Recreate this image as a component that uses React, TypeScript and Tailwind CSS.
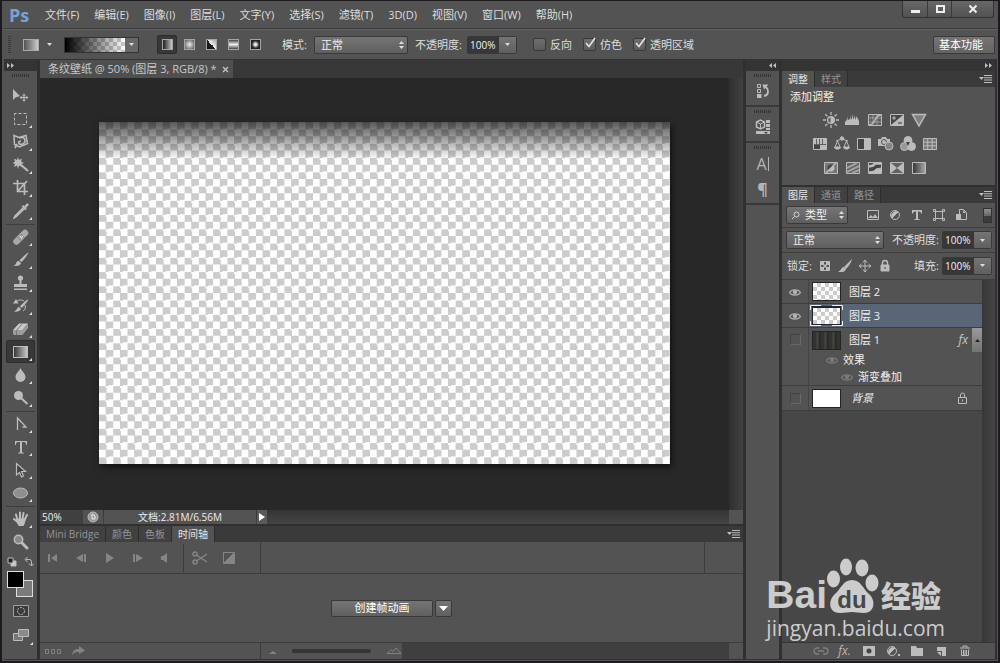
import { useState } from 'react'
import type { ReactNode } from 'react'

const CHECKER = 'bg-[repeating-conic-gradient(#cccccc_0_25%,#ffffff_0_50%)]'

const menus = [
  '文件(F)', '编辑(E)', '图像(I)', '图层(L)', '文字(Y)', '选择(S)',
  '滤镜(T)', '3D(D)', '视图(V)', '窗口(W)', '帮助(H)',
]

interface IconProps {
  children: ReactNode
  w?: number
  h?: number
  className?: string
}

function Icon({ children, w = 16, h = 16, className = 'text-[#bcbcbc]' }: IconProps) {
  return (
    <svg width={w} height={h} viewBox={`0 0 ${w} ${h}`} fill="none" stroke="currentColor" className={`shrink-0 ${className}`} aria-hidden="true">
      {children}
    </svg>
  )
}

interface Tool {
  name: string
  icon: ReactNode
  single?: boolean
}

const toolGroups: Tool[][] = [
  [
    {
      name: '移动工具',
      single: true,
      icon: (
        <g fill="currentColor" stroke="none">
          <path d="M0 1v11l2.500-2.500L7 8z" />
          <path d="M11 5.500l1.800 2h-1.200v1.400h1.700V7.700l2.200 1.800-2.200 1.800v-1.200h-1.700v1.700h1.200l-1.800 2-1.800-2h1.200v-1.700H8.700v1.200L6.500 9.500l2.200-1.800v1.200h1.700V7.500H9.200z" />
        </g>
      ),
    },
    { name: '矩形选框工具', icon: <rect x="1.500" y="2.500" width="12" height="11" strokeDasharray="3 2" strokeDashoffset="1" /> },
    {
      name: '套索工具',
      icon: (
        <g>
          <path d="M1 1.500l5 2 7-2 1.500 8-8 3.500-5-2.500z" strokeWidth="1.500" />
          <path d="M6 4c4-1.500 6 0 6 3s-4 4-5.500 3S5.500 7 8 7M4 10l-2 4" strokeWidth="1.700" />
        </g>
      ),
    },
    {
      name: '魔棒工具',
      icon: (
        <g>
          <path d="M7.500 7.500L15 14" strokeWidth="2.200" />
          <path d="M5 0l1 3 3-1.500L8 4.500 11 6 8 7l1 3-3-1.500L5 12 4 8.500 1 10l1-3-2.500-1L2 4.500 1 1.500 4 3z" fill="currentColor" stroke="none" />
        </g>
      ),
    },
    { name: '裁剪工具', icon: <path d="M4.500 0v11.500H15M0 3.500h11.500V15M4.500 11.500L14 1" strokeWidth="1.700" /> },
    {
      name: '吸管工具',
      icon: (
        <g>
          <path d="M10 5l-8 8-1 2 2-1 8-8" strokeWidth="1.400" />
          <path d="M9 3.500l1-1 1.500 1 2-2.500c1.500-1 2.500.5 1.500 1.500l-2.500 2.500 1 1-1.500 1z" fill="currentColor" strokeWidth=".6" />
        </g>
      ),
    },
  ],
  [
    {
      name: '污点修复画笔工具',
      icon: (
        <g>
          <path d="M3.500 12.500L12 4" strokeWidth="6.500" strokeLinecap="round" stroke="#a8a8a8" />
          <path d="M4.500 8l4 4M7.500 5l4 4" stroke="#7a7a7a" />
          <path d="M8 9h1M9 7.500h1M7 8h1" stroke="#eee" />
        </g>
      ),
    },
    {
      name: '画笔工具',
      icon: (
        <g fill="currentColor" stroke="none">
          <path d="M15.500.500C16 1 10 9 8.500 10L6.500 8.500C7.500 7 15 0 15.500.500z" />
          <path d="M5.800 9l2.200 2c-.5 3-5 3.500-8 2.500 2-.3 2.800-1 3.200-2.500.400-1.500 1.500-2 2.600-2z" />
        </g>
      ),
    },
    {
      name: '仿制图章工具',
      icon: (
        <g fill="currentColor" stroke="none">
          <circle cx="7.500" cy="3" r="2.600" />
          <path d="M6.500 4h2v5H14v3H1V9h5.500z" />
          <path d="M1 13.500h13V15H1z" />
        </g>
      ),
    },
    {
      name: '历史记录画笔工具',
      icon: (
        <g>
          <path d="M15 1.500C16 2 10 9 9 10L7 8.500C8 7 14 1 15 1.500zM6 9l2 2c-1 2.500-4 3-7 2.500 3-1 3-4.500 5-4.500z" fill="currentColor" stroke="none" />
          <path d="M3 4c3-3 6-2 8-1M12 7c1 3 0 5-2 6" />
          <path d="M0 5.500L3 1l2.500 4.500z" fill="currentColor" stroke="none" />
        </g>
      ),
    },
    {
      name: '橡皮擦工具',
      icon: (
        <g stroke="none">
          <path d="M0 9l6-6.500h9L9.500 9z" fill="#cacaca" />
          <path d="M0 9h9.500v5H1.500C.5 14 0 13 0 12zM9.500 9L15 2.500V7l-5.500 7z" fill="#9c9c9c" />
          <path d="M3.500 9.500L9.500 2.500M3.500 9v5" stroke="#777" fill="none" />
        </g>
      ),
    },
    {
      name: '渐变工具',
      icon: (
        <g>
          <defs>
            <linearGradient id="toolGradient">
              <stop stopColor="#333" />
              <stop offset="1" stopColor="#ccc" />
            </linearGradient>
          </defs>
          <rect x=".5" y="2.500" width="14" height="11" fill="url(#toolGradient)" />
        </g>
      ),
    },
    { name: '模糊工具', icon: <path d="M7.500 1c1 3 5 5.500 5 9a5 5 0 01-10 0c0-3.500 4-6 5-9z" fill="currentColor" stroke="none" /> },
    {
      name: '减淡工具',
      icon: (
        <g>
          <circle cx="5.500" cy="5.500" r="4.500" fill="currentColor" stroke="none" />
          <path d="M8 8l6.500 6" strokeWidth="2" />
        </g>
      ),
    },
  ],
  [
    { name: '钢笔工具', icon: <path d="M4.500 14V2L13 11H9.500" strokeWidth="1.300" /> },
    {
      name: '横排文字工具',
      icon: <path d="M2 2h12v4h-.8C13 4 12.500 3 11 3H9v9.500c0 1 .5 1.200 2 1.300v.7H5v-.7c1.500-.1 2-.3 2-1.300V3H5C3.500 3 3 4 2.800 6H2z" fill="currentColor" stroke="none" />,
    },
    { name: '路径选择工具', icon: <path d="M3.500 1.500v11.500l3-2.500 2 4.500 2-1-2-4.500h4z" fill="#404040" strokeWidth="1.200" /> },
    { name: '椭圆工具', icon: <ellipse cx="7.500" cy="8" rx="7" ry="5" fill="#8f8f8f" /> },
  ],
  [
    {
      name: '抓手工具',
      icon: (
        <g>
          <path d="M4.500 9L3 3.500M7 8V1.500M9.500 8l1-6M11.500 9l2.500-5M4.500 11L1 8" strokeWidth="2" strokeLinecap="round" />
          <path d="M3.500 7.500h9c0 4-1 5.500-2 7.500h-5c-.5-2-2.500-3-2-7.500z" fill="currentColor" stroke="none" />
        </g>
      ),
    },
    {
      name: '缩放工具',
      single: true,
      icon: (
        <g>
          <circle cx="5.500" cy="5.500" r="4.200" fill="#888" strokeWidth="1.500" />
          <path d="M9 9l5 5" strokeWidth="3" strokeLinecap="round" />
        </g>
      ),
    },
  ],
]

const SelectArrows = ({ className = '' }: { className?: string }) => (
  <svg width="7" height="8" viewBox="0 0 7 8" fill="#dedede" className={`pointer-events-none absolute top-1/2 -translate-y-1/2 ${className}`} aria-hidden="true">
    <path d="M3.500 0L6 3H1zM1 5h5L3.500 8z" />
  </svg>
)

const Down = ({ className = 'text-[#dedede]' }: { className?: string }) => (
  <svg width="5" height="3" viewBox="0 0 5 3" fill="currentColor" className={className} aria-hidden="true">
    <path d="M0 0h5L2.500 3z" />
  </svg>
)

function Select({ label, options, width, pad = 'pl-[6px]' }: { label: string; options: string[]; width: string; pad?: string }) {
  return (
    <span className={`relative flex shrink-0 ${width}`}>
      <select aria-label={label} className={`h-[18px] w-full appearance-none rounded-[2px] border border-[#393939] bg-linear-to-b from-[#757575] to-[#5f5f5f] leading-4 text-[#f0f0f0] ${pad}`}>
        {options.map((o) => (
          <option key={o}>{o}</option>
        ))}
      </select>
      <SelectArrows className="right-[3px]" />
    </span>
  )
}

function Percent({ label }: { label: string }) {
  const [value, setValue] = useState('100%')
  return (
    <span className="flex h-[18px] shrink-0 rounded-[2px] border border-[#393939]">
      <input
        aria-label={label}
        value={value}
        onChange={(e) => setValue(e.target.value)}
        className="w-[31px] bg-[#373737] px-[2px] text-[10px] leading-4 text-[#f2f2f2]"
      />
      <button aria-label={`${label}滑块`} className="flex w-[17px] items-center justify-center bg-linear-to-b from-[#757575] to-[#5f5f5f]">
        <Down />
      </button>
    </span>
  )
}

function Check({ label, checked = false }: { label: string; checked?: boolean }) {
  const [on, setOn] = useState(checked)
  return (
    <label className="flex items-center gap-1">
      <span className="relative flex">
        <input
          type="checkbox"
          checked={on}
          onChange={() => setOn(!on)}
          className="size-[13px] appearance-none rounded-[2px] border border-[#393939] bg-linear-to-b from-[#6e6e6e] to-[#5c5c5c]"
        />
        {on && (
          <svg width="14" height="13" viewBox="0 0 14 13" fill="none" stroke="#e4e4e4" strokeWidth="1.600" className="pointer-events-none absolute -top-px left-0" aria-hidden="true">
            <path d="M3 6l3 3.500L12 1" />
          </svg>
        )}
      </span>
      {label}
    </label>
  )
}

const Divider = () => <span className="h-[20px] w-px shrink-0 bg-[#3c3c3c]" />

const Grip = () => (
  <span className="mx-auto block h-[3px] w-[18px] bg-[repeating-linear-gradient(90deg,#333333_0_1px,#535353_1px_2px)]" />
)

const PanelMenu = () => (
  <button aria-label="面板菜单" className="ml-auto flex items-center px-[3px]">
    <svg width="13" height="8" viewBox="0 0 13 8" fill="#bdbdbd" aria-hidden="true">
      <path d="M0 2h5L2.500 5zM5 0h8v1H5zM5 2.300h8v1H5zM5 4.600h8v1H5zM5 7h8v1H5z" />
    </svg>
  </button>
)

function Tabs({ items, active }: { items: string[]; active: number }) {
  const [current, setCurrent] = useState(active)
  return (
    <div className="flex h-4 shrink-0 bg-[#3a3a3a] text-[10px]">
      {items.map((t, i) => (
        <button
          key={t}
          onClick={() => setCurrent(i)}
          className={`border-r border-[#2c2c2c] px-[6px] leading-4 ${i === current ? 'bg-[#535353] text-[#e6e6e6]' : 'bg-[#414141] text-[#959595]'}`}
        >
          {t}
        </button>
      ))}
      <PanelMenu />
    </div>
  )
}

const Chevrons = ({ left = false }: { left?: boolean }) => (
  <svg width="7" height="5" viewBox="0 0 7 5" fill="#c0c0c0" className={left ? 'rotate-180' : ''} aria-hidden="true">
    <path d="M0 0l3 2.500L0 5zM4 0l3 2.500L4 5z" />
  </svg>
)

const Eye = ({ dim = false }: { dim?: boolean }) => (
  <svg width="12" height="8" viewBox="0 0 12 8" className={dim ? 'text-[#7a7a7a]' : 'text-[#b4b4b4]'} fill="none" stroke="currentColor" aria-hidden="true">
    <path d="M.5 4.500C2.500 1 9.500 1 11.500 4.500 9.500 8 2.500 8 .5 4.500z" strokeWidth="1.200" />
    <circle cx="6" cy="4.200" r="1.700" fill="currentColor" />
  </svg>
)

function MenuBar() {
  return (
    <header className="flex h-[28px] shrink-0 items-center border-b border-[#3a3a3a] pl-[5px]">
      <span className="w-[36px] text-[18px] leading-5 font-bold text-[#74a3d6]">Ps</span>
      <nav className="flex gap-[15px]">
        {menus.map((m) => (
          <button key={m} className="whitespace-nowrap">{m}</button>
        ))}
      </nav>
      <div className="mr-[3px] ml-auto flex h-[17px] self-start rounded-b-[3px] border border-t-0 border-[#343434] bg-linear-to-b from-[#686868] to-[#525252]">
        <button aria-label="最小化" className="flex w-[25px] items-center justify-center border-r border-[#3a3a3a]">
          <Icon w={10} h={10} className="text-[#eeeeee]"><path d="M1 7.500h9" strokeWidth="3" /></Icon>
        </button>
        <button aria-label="最大化" className="flex w-[24px] items-center justify-center border-r border-[#3a3a3a]">
          <Icon w={10} h={10} className="text-[#eeeeee]"><path d="M2 2h7v6H2z" strokeWidth="2" /></Icon>
        </button>
        <button aria-label="关闭" className="flex w-[41px] items-center justify-center">
          <Icon w={10} h={10} className="text-[#eeeeee]"><path d="M1.500 1.500l7 7M8.500 1.500l-7 7" strokeWidth="2" /></Icon>
        </button>
      </div>
    </header>
  )
}

const gradientModes = [
  { name: '线性渐变', bg: 'bg-linear-to-r from-[#222222] to-[#cccccc]' },
  { name: '径向渐变', bg: 'bg-[radial-gradient(#eeeeee,#555555)]' },
  { name: '角度渐变', bg: 'bg-[linear-gradient(45deg,#111111,#222222_50%,#eeeeee_50%,#aaaaaa)]' },
  { name: '对称渐变', bg: 'bg-[linear-gradient(#444444,#eeeeee_50%,#444444)]' },
  { name: '菱形渐变', bg: 'bg-[radial-gradient(#ffffff_10%,#222222_60%,#222222)]' },
]

function OptionsBar() {
  const [mode, setMode] = useState(0)
  return (
    <div className="flex h-[31px] shrink-0 items-center border-t border-b border-t-[#626262] border-b-[#333333] pl-1">
      <span className="h-[18px] w-[3px] bg-[repeating-linear-gradient(#3b3b3b_0_1px,#535353_1px_2px)]" />
      <button aria-label="工具预设" className="ml-[12px] flex items-center gap-2">
        <span className="h-[12px] w-[16px] border border-[#aaaaaa] bg-linear-to-r from-[#555555] to-[#cccccc]" />
        <Down />
      </button>
      <span className="ml-[5px]"><Divider /></span>
      <button aria-label="渐变编辑器" className="ml-[7px] flex h-[16px] border border-[#323232]">
        <span className={`block h-full w-[60px] bg-[size:8px_8px] ${CHECKER}`}>
          <span className="block h-full bg-linear-to-r from-black to-transparent" />
        </span>
        <span className="flex h-full w-[13px] items-center justify-center bg-[#686868]"><Down /></span>
      </button>
      <span className="ml-[10px]"><Divider /></span>
      <div className="ml-[8px] flex gap-[2px]">
        {gradientModes.map((g, i) => (
          <button
            key={g.name}
            aria-label={g.name}
            onClick={() => setMode(i)}
            className={`flex h-[19px] w-[20px] items-center justify-center rounded-[2px] ${i === mode ? 'border border-[#2c2c2c] bg-[#383838]' : ''}`}
          >
            <span className={`size-[11px] border border-[#a5a5a5] ${g.bg}`} />
          </button>
        ))}
      </div>
      <span className="ml-[8px]"><Divider /></span>
      <span className="ml-[9px] w-[32px] whitespace-nowrap">模式:</span>
      <Select label="模式" options={['正常', '溶解', '正片叠底']} width="w-[94px]" />
      <span className="ml-[7px] w-[52px] whitespace-nowrap">不透明度:</span>
      <Percent label="不透明度" />
      <span className="mx-[8px]"><Divider /></span>
      <div className="flex gap-[11px] whitespace-nowrap">
        <Check label="反向" />
        <Check label="仿色" checked />
        <Check label="透明区域" checked />
      </div>
      <button className="mr-[2px] ml-auto h-[18px] w-[62px] rounded-l-[2px] border border-[#393939] bg-linear-to-b from-[#757575] to-[#636363] pr-[6px] leading-4 whitespace-nowrap text-white">
        基本功能
      </button>
    </div>
  )
}

function Toolbar() {
  const [active, setActive] = useState('渐变工具')
  return (
    <aside className="flex w-[33px] shrink-0 flex-col">
      <div className="flex h-[11px] items-center bg-[#343434] pl-[3px]"><Chevrons /></div>
      <div className="h-[13px] pt-[3px]"><Grip /></div>
      {toolGroups.map((group, i) => (
        <div key={group[0].name} className={i < 3 ? 'mx-[2px] border-b border-[#3d3d3d] pb-[2px]' : 'mx-[2px]'}>
          {group.map((tool) => (
            <button
              key={tool.name}
              aria-label={tool.name}
              onClick={() => setActive(tool.name)}
              className={`relative flex h-[23px] w-full items-center justify-center rounded-[2px] border ${tool.name === active ? 'border-[#2e2e2e] bg-[#383838]' : 'border-transparent'}`}
            >
              <Icon>{tool.icon}</Icon>
              {!tool.single && (
                <svg width="3" height="3" viewBox="0 0 3 3" className="absolute right-[2px] bottom-[1px]" aria-hidden="true">
                  <path d="M3 0v3H0z" fill="#e0e0e0" />
                </svg>
              )}
            </button>
          ))}
        </div>
      ))}
      <div className="flex justify-between px-[3px] py-[4px]">
        <button aria-label="默认颜色">
          <Icon w={10} h={10}><path d="M4 4h5v5H4z" fill="#ccc" /><path d="M1 1h5v5H1z" fill="#222" /></Icon>
        </button>
        <button aria-label="切换颜色">
          <Icon w={10} h={10}><path d="M2 2.500h3.500q2 0 2 2V8M3.500 0L1 2.500 3.500 5M5 6.500L7.500 9 10 6.500" /></Icon>
        </button>
      </div>
      <div className="mx-[3px] grid h-[27px] grid-cols-[9px_8px_9px] grid-rows-[9px_8px_9px]">
        <button aria-label="背景色" className="col-span-2 col-start-2 row-span-2 row-start-2 border border-[#dddddd] bg-[#7d7b79]" />
        <button aria-label="前景色" className="col-span-2 col-start-1 row-span-2 row-start-1 border border-[#dddddd] bg-black" />
      </div>
      <button aria-label="快速蒙版" className="mt-[4px] flex h-[18px] items-center justify-center">
        <Icon h={12}><path d="M.5.5h15v11H.5z" fill="#3c3c3c" stroke="#a0a0a0" /><circle cx="8" cy="6" r="3.500" strokeDasharray="2 1" /></Icon>
      </button>
      <button aria-label="屏幕模式" className="relative mt-[6px] flex h-[18px] items-center justify-center">
        <Icon h={14}><path d="M.5 5.500h9v7h-9z" fill="#777" /><path d="M5.500 1.500h10v7h-10z" fill="#8a8a8a" /></Icon>
        <svg width="3" height="3" viewBox="0 0 3 3" className="absolute right-[4px] -bottom-px" aria-hidden="true">
          <path d="M3 0v3H0z" fill="#e0e0e0" />
        </svg>
      </button>
    </aside>
  )
}

function Workspace() {
  return (
    <section className="flex min-h-0 flex-1 flex-col bg-[#282828]" aria-label="文档">
      <div className="flex h-[18px] shrink-0 bg-[#383838]">
        <div className="flex items-center gap-[5px] bg-[#4f4f4f] pr-[4px] pl-[8px] whitespace-nowrap text-[#c8c8c8]">
          条纹壁纸 @ 50% (图层 3, RGB/8) *
          <button aria-label="关闭文档">
            <Icon w={7} h={7} className="text-[#c4c4c4]"><path d="M1 1l5 5M6 1L1 6" strokeWidth="1.300" /></Icon>
          </button>
        </div>
      </div>
      <div className="flex min-h-0 flex-1">
        <div className="flex min-w-0 flex-1 px-[59px] pt-[44px] pb-[46px]">
          <div className={`flex-1 bg-[size:2.5%_4.1667%] shadow-[2px_3px_6px_#111111] ${CHECKER}`}>
            <div className="h-[38px] bg-linear-to-b from-black/65 to-transparent" />
          </div>
        </div>
        <div className="w-[14px] bg-linear-to-r from-[#2f2f2f] to-[#414141]" />
      </div>
      <div className="flex h-[14px] shrink-0 bg-linear-to-b from-[#343434] to-[#454545] text-[10px] text-[#eeeeee]">
        <input aria-label="缩放比例" defaultValue="50%" className="w-[43px] bg-[#404040] pl-[2px] leading-[14px]" />
        <button aria-label="版本" className="flex w-[20px] items-center justify-center bg-[#535353]">
          <Icon w={12} h={12}><circle cx="6" cy="6" r="5" fill="#999" /><path d="M5 3v5h3V5z" stroke="#eee" /></Icon>
        </button>
        <span className="ml-px w-[152px] bg-[#535353] text-center leading-[14px]">文档:2.81M/6.56M</span>
        <button aria-label="状态栏选项" className="ml-px flex w-[10px] items-center justify-center bg-[#5a5a5a]">
          <svg width="6" height="8" viewBox="0 0 6 8" fill="#fff" aria-hidden="true"><path d="M0 0l6 4-6 4z" /></svg>
        </button>
        <span className="ml-auto w-[14px] bg-[#535353]" />
      </div>
    </section>
  )
}

function Timeline() {
  return (
    <section className="flex shrink-0 flex-col" aria-label="时间轴">
      <Tabs items={['Mini Bridge', '颜色', '色板', '时间轴']} active={3} />
      <div className="flex h-[32px] items-center border-b border-[#3c3c3c] pl-[6px] text-[#858585]">
        <div className="flex gap-[12px]">
          <button aria-label="第一帧"><Icon className="text-inherit"><path d="M2 4h2v8H2zM11 4v8L5 8z" fill="currentColor" stroke="none" /></Icon></button>
          <button aria-label="上一帧"><Icon className="text-inherit"><path d="M9 4v8L2 8zM10 4h2v8h-2z" fill="currentColor" stroke="none" /></Icon></button>
          <button aria-label="播放"><Icon className="text-inherit"><path d="M4 3v10l8-5z" fill="currentColor" stroke="none" /></Icon></button>
          <button aria-label="下一帧"><Icon className="text-inherit"><path d="M3 4h2v8H3zM6 4v8l7-4z" fill="currentColor" stroke="none" /></Icon></button>
          <button aria-label="声音"><Icon className="text-inherit"><path d="M3 6h2l4-3v10l-4-3H3z" fill="currentColor" stroke="none" /></Icon></button>
        </div>
        <span className="ml-[9px] h-[28px] w-px bg-[#3c3c3c]" />
        <button aria-label="拆分" className="ml-[8px]">
          <Icon className="text-inherit"><circle cx="3" cy="4" r="2" strokeWidth="1.500" /><circle cx="3" cy="12" r="2" strokeWidth="1.500" /><path d="M4.500 5L15 12M4.500 11L15 4" strokeWidth="1.500" /></Icon>
        </button>
        <button aria-label="过渡效果" className="ml-[13px]">
          <Icon className="text-inherit"><path d="M2.500 2.500h11v11h-11z" /><path d="M13 3v10H3z" fill="currentColor" /></Icon>
        </button>
        <span className="ml-[23px] h-full w-px bg-[#3c3c3c]" />
        <span className="mr-[38px] ml-auto h-full w-px bg-[#3c3c3c]" />
      </div>
      <div className="flex h-[68px] items-center justify-center gap-[2px]">
        <button className="h-[17px] w-[102px] rounded-[2px] border border-[#383838] bg-linear-to-b from-[#757575] to-[#606060] leading-[14px] text-white">创建帧动画</button>
        <button aria-label="选择动画类型" className="flex h-[17px] w-[17px] items-center justify-center rounded-[2px] border border-[#383838] bg-linear-to-b from-[#757575] to-[#606060]">
          <svg width="9" height="5" viewBox="0 0 9 5" fill="#fff" aria-hidden="true"><path d="M0 0h9L4.500 5z" /></svg>
        </button>
      </div>
      <div className="flex h-[17px] items-center border-t border-[#3c3c3c] bg-[#3f3f3f] text-[#828282]">
        <div className="flex h-full w-[221px] items-center gap-[11px] border-r border-[#3c3c3c] bg-[#535353] pl-[5px]">
          <button aria-label="帧"><Icon h={8} className="text-inherit"><path d="M.5 2.500h3v4h-3zM6.500 2.500h3v4h-3zM12.500 2.500h3v4h-3z" /></Icon></button>
          <button aria-label="渲染"><Icon w={13} h={10} className="text-inherit"><path d="M0 9c1-5 3-6 7-6V0l6 4.500L7 8V6C4 6 2 6.500 0 9z" fill="currentColor" stroke="none" /></Icon></button>
        </div>
        <div className="flex h-full w-[141px] items-center gap-[15px] bg-[#535353] pl-[8px]">
          <Icon w={8} h={5} className="text-inherit"><path d="M0 5l4-3 4 3z" fill="currentColor" stroke="none" /></Icon>
          <input type="range" aria-label="时间轴缩放" className="h-[4px] w-[79px] appearance-none rounded-full bg-[#353535] [&::-webkit-slider-thumb]:appearance-none" />
          <Icon h={8} className="text-inherit"><path d="M1 6.500l4-4 2 2 3-3.500 5 5.500z" /></Icon>
        </div>
        <span className="ml-auto h-full w-[14px] bg-[#535353]" />
      </div>
    </section>
  )
}

function Dock() {
  return (
    <aside className="flex w-[33px] shrink-0 flex-col text-[#b5b5b5]">
      <div className="flex h-[11px] items-center justify-end bg-[#343434] pr-[3px]"><Chevrons left /></div>
      <div className="flex h-[36px] flex-col items-center gap-[5px] border-b-2 border-[#393939] pt-[3px]">
        <Grip />
        <button aria-label="历史记录">
          <Icon h={18}><path d="M2.500 2.500h3v3h-3zM2.500 7.500h3v3h-3z" /><path d="M2 12h4.500v4H2z" fill="currentColor" stroke="none" /><path d="M9 14c5-1 5-6 2-9" strokeWidth="1.800" /><path d="M7.500 2.500h6L9 7.500z" fill="currentColor" stroke="none" /></Icon>
        </button>
      </div>
      <div className="flex h-[36px] flex-col items-center gap-[5px] border-b-2 border-[#393939] pt-[3px]">
        <Grip />
        <button aria-label="属性">
          <Icon h={18}><path d="M1.500 4L5.500 2 9.500 4v5l-4 2-4-2z" strokeWidth="1.500" /><path d="M1.500 4l4 2 4-2M5.500 6v5" /><path d="M11 2h4v3h-4zM11 6h4v3h-4zM11 10h4v2h-4zM1 13h14v3H1z" fill="currentColor" stroke="none" /><path d="M9 14h4l-2 2z" fill="#444" stroke="none" /></Icon>
        </button>
      </div>
      <div className="flex h-[62px] flex-col items-center gap-[6px] border-b-2 border-[#393939] pt-[3px]">
        <Grip />
        <button aria-label="字符" className="flex items-center gap-px text-[16px] leading-[18px] font-normal">
          A<span className="h-[14px] w-px bg-current" />
        </button>
        <button aria-label="段落" className="text-[16px] leading-5 font-bold">¶</button>
      </div>
    </aside>
  )
}

const box = <path d="M1.500 2.500h13v11h-13z" fill="#5f5f5f" />

const adjustments: { name: string; icon: ReactNode }[][] = [
  [
    { name: '亮度/对比度', icon: <g><circle cx="8" cy="8" r="3.300" strokeWidth="1.400" /><path d="M8 5v6a3 3 0 000-6z" fill="currentColor" /><path d="M8 0v3M8 13v3M0 8h3M13 8h3M2.300 2.300l2 2M11.700 11.700l2 2M2.300 13.700l2-2M11.700 4.300l2-2" strokeWidth="1.300" /></g> },
    { name: '色阶', icon: <path d="M0 13V9l1 1V7l1 2 1-5v4l2-1V3l1 5 1-2 1-4v5l1-1 1-3v5l2-4v3l1-2v4l1-2v6z" fill="currentColor" stroke="none" /> },
    { name: '曲线', icon: <g>{box}<path d="M2 6h12M2 10h12M6 3v10M10 3v10" strokeWidth=".6" /><path d="M2 13c7 0 5-10 12-10" strokeWidth="1.500" /></g> },
    { name: '曝光度', icon: <g><path d="M1.500 2.500h13v11h-13z" fill="#484848" /><path d="M14 3v10H2z" fill="currentColor" stroke="none" /><path d="M3 6h4M5 4v4" /><path d="M9 11h4" stroke="#333" /></g> },
    { name: '自然饱和度', icon: <path d="M1.500 2.500h13L8 14z" fill="#808080" strokeWidth="1.500" /> },
  ],
  [
    { name: '色相/饱和度', icon: <g>{box}<path d="M2 3h2v5H2zM5 3h2v5H5zM8 3h2v5H8zM11 3h3v5h-3zM8 9h6v4H8z" fill="currentColor" stroke="none" /><path d="M2 9h6v4H2z" fill="#444" stroke="none" /></g> },
    { name: '色彩平衡', icon: <g><path d="M8 1v3M2 5l6-2 6 2M3.500 5l-3 7h6zM12.500 5l-3 7h6z" /><circle cx="8" cy="2.500" r="1.700" fill="currentColor" /><path d="M1 11h5l-1 2H2zM10 11h5l-1 2h-3z" fill="currentColor" /></g> },
    { name: '黑白', icon: <g><path d="M1.500 2.500h13v11h-13z" fill="#444" /><path d="M8 3h6v10H8z" fill="currentColor" stroke="none" /></g> },
    { name: '照片滤镜', icon: <g><path d="M0 3h3l1-2h4l1 2h3v7H0z" fill="currentColor" stroke="none" /><circle cx="6" cy="6" r="2.500" stroke="#555" /><circle cx="11" cy="10" r="4" fill="#858585" /></g> },
    { name: '通道混合器', icon: <g><circle cx="8" cy="4.500" r="4" fill="currentColor" /><circle cx="4.500" cy="10.500" r="4" fill="#999" /><circle cx="11.500" cy="10.500" r="4" fill="currentColor" /><path d="M6 6h4l-2 4z" fill="#444" stroke="none" /></g> },
    { name: '颜色查找', icon: <g><path d="M1.500 2.500h13v11h-13z" fill="#777" /><path d="M2 6.200h12M2 9.800h12M5.700 3v10M10.200 3v10" /></g> },
  ],
  [
    { name: '反相', icon: <g><path d="M1.500 2.500h13v11h-13z" fill="#777" /><circle cx="8" cy="8" r="3.500" fill="#444" stroke="none" /><path d="M3 13L13 3" strokeWidth="1.500" /><path d="M5.500 10.500a3.500 3.500 0 005-5z" fill="currentColor" stroke="none" /></g> },
    { name: '色调分离', icon: <g>{box}<path d="M2 8l10-5M2 12l12-6M7 13l7-3" stroke="#a0a0a0" strokeWidth="2" /></g> },
    { name: '阈值', icon: <g><path d="M1.500 2.500h13v11h-13z" fill="#444" /><path d="M2 6.500l4-1 2-2h6" strokeWidth="2.500" /><path d="M2 12l5-1 2-2 5-1v5H2z" fill="currentColor" /></g> },
    { name: '可选颜色', icon: <g><path d="M1.500 2.500h13v11h-13z" fill="#636363" /><path d="M2 3l6 5-6 5zM14 3L8 8l6 5z" fill="currentColor" stroke="none" /></g> },
    { name: '渐变映射', icon: <g><defs><linearGradient id="mapGradient"><stop stopColor="#333" /><stop offset="1" stopColor="#aaa" /></linearGradient></defs><path d="M1.500 2.500h13v11h-13z" fill="url(#mapGradient)" /></g> },
  ],
]

function AdjustPanel() {
  return (
    <section className="shrink-0" aria-label="调整">
      <Tabs items={['调整', '样式']} active={0} />
      <div className="h-[98px] pt-[2px] pl-[8px]">
        <h2 className="leading-4 text-[#f0f0f0]">添加调整</h2>
        <div className="flex flex-col items-center gap-[8px] pt-[7px] pr-[35px]">
          {adjustments.map((row) => (
            <div key={row[0].name} className="flex gap-[6px]">
              {row.map((a) => (
                <button key={a.name} aria-label={a.name}><Icon>{a.icon}</Icon></button>
              ))}
            </div>
          ))}
        </div>
      </div>
    </section>
  )
}

const filters = [
  { name: '像素图层', icon: <g><path d="M1.500 1.500h11v9h-11z" /><path d="M2 9l3-3 2 2 2-3 3 4z" fill="currentColor" stroke="none" /></g> },
  { name: '调整图层', icon: <g><circle cx="7" cy="6" r="4.500" /><path d="M10 3L4 9A4.500 4.500 0 0110 3z" fill="currentColor" /></g> },
  { name: '文字图层', icon: <path d="M2 1h10v3.500h-1C11 3 10 2.500 8 2.500V10l2 .5v.5H4v-.5l2-.5V2.500C4 2.500 3 3 3 4.500H2z" fill="currentColor" stroke="none" /> },
  { name: '形状图层', icon: <path d="M3.500 2.500h7v7h-7zM1.500.5h2v2h-2zM10.500.5h2v2h-2zM1.500 9.500h2v2h-2zM10.500 9.500h2v2h-2z" /> },
  { name: '智能对象', icon: <g><path d="M5.500.5h4l3 3v7h-7z" /><path d="M2 5h5v6H2zM9 1v3h3z" fill="currentColor" stroke="none" /></g> },
]

const Hidden = () => <span className="size-[11px] border border-t-[#444444] border-r-[#686868] border-b-[#686868] border-l-[#444444]" />

const rowClass = 'flex h-6 items-center border-b border-[#3d3d3d]'
const eyeCell = 'flex h-full w-[27px] shrink-0 items-center justify-center border-r border-[#454545]'
const thumb = 'ml-[3px] h-[19px] w-[29px] shrink-0 border border-[#252525]'

function LayersPanel() {
  return (
    <section className="flex min-h-0 flex-1 flex-col" aria-label="图层">
      <Tabs items={['图层', '通道', '路径']} active={0} />
      <div className="flex h-[25px] shrink-0 items-center border-b border-[#3e3e3e] pr-[3px] pl-[4px]">
        <div className="relative flex">
          <Select label="图层过滤" options={['类型', '名称', '效果']} width="w-[62px]" pad="pl-[18px]" />
          <svg width="9" height="9" viewBox="0 0 9 9" fill="none" stroke="#d5d5d5" className="pointer-events-none absolute top-[5px] left-[5px]" aria-hidden="true">
            <circle cx="5.500" cy="3.500" r="2.500" /><path d="M3.500 5.500L1 8" />
          </svg>
        </div>
        <div className="ml-[18px] flex gap-[8px]">
          {filters.map((f) => (
            <button key={f.name} aria-label={f.name}><Icon w={14} h={12}>{f.icon}</Icon></button>
          ))}
        </div>
        <button aria-label="打开过滤" className="ml-auto h-[15px] w-[9px] border border-[#333333] bg-[#3c3c3c]">
          <span className="mb-[6px] block h-[7px] bg-linear-to-b from-[#909090] to-[#666666]" />
        </button>
      </div>
      <div className="flex h-[25px] shrink-0 items-center border-b border-[#3e3e3e] pr-[3px] pl-[4px]">
        <Select label="混合模式" options={['正常', '溶解', '正片叠底']} width="w-[98px]" />
        <span className="mr-[3px] ml-auto whitespace-nowrap">不透明度:</span>
        <Percent label="图层不透明度" />
      </div>
      <div className="flex h-[27px] shrink-0 items-center border-b border-[#3e3e3e] pr-[3px] pb-px pl-[5px]">
        <span className="whitespace-nowrap">锁定:</span>
        <div className="ml-[6px] flex gap-[6px]">
          <button aria-label="锁定透明像素"><Icon w={14} h={14}><path d="M2.500 2.500h9v9h-9z" fill="#555" /><path d="M3 3h3v3H3zM8 3h3v3H8zM5.500 5.500h3v3h-3zM3 8h3v3H3zM8 8h3v3H8z" fill="currentColor" stroke="none" /></Icon></button>
          <button aria-label="锁定图像像素"><Icon w={14} h={14}><path d="M14 0C13 5 9 9 8 10L6 8zM5.500 8L8 10C7 13.500 2 13.500 0 12.500c3 0 3-4 5.500-4.500z" fill="currentColor" stroke="none" /></Icon></button>
          <button aria-label="锁定位置"><Icon w={14} h={14}><path d="M7 2v10M2 7h10M5 3.500L7 1l2 2.500M5 10.500L7 13l2-2.500M3.500 5L1 7l2.500 2M10.500 5L13 7l-2.500 2" /></Icon></button>
          <button aria-label="锁定全部"><Icon w={14} h={14}><path d="M3 6h8v6H3z" fill="currentColor" /><path d="M4.500 6V4a2.500 2.500 0 015 0v2" strokeWidth="1.500" /><path d="M7 8v2" stroke="#444" /></Icon></button>
        </div>
        <span className="mr-[3px] ml-auto whitespace-nowrap">填充:</span>
        <Percent label="填充" />
      </div>
      <div className="flex min-h-0 flex-1">
        <ul className="flex-1 bg-[#474747] text-[#efefef]">
          <li className={`${rowClass} bg-[#535353]`}>
            <button aria-label="隐藏图层 2" className={eyeCell}><Eye /></button>
            <span className={`${thumb} bg-[size:8px_8px] ${CHECKER}`} />
            <span className="ml-[8px]">图层 2</span>
          </li>
          <li className={`${rowClass} bg-[#596678]`}>
            <button aria-label="隐藏图层 3" className={`${eyeCell} bg-[#535353]`}><Eye /></button>
            <span className="relative ml-px flex h-[23px] w-[33px] shrink-0 items-center justify-center">
              <span className={`h-[19px] w-[29px] border border-t-2 border-[#252525] bg-[size:8px_8px] ${CHECKER}`} />
              <svg width="33" height="23" viewBox="0 0 33 23" fill="none" stroke="#f2f2f2" className="absolute inset-0" aria-hidden="true">
                <path d="M.5 6V1.500H11M22 1.500h10.500V6M.5 17v4.500H11M22 21.500h10.500V17" />
              </svg>
            </span>
            <span className="ml-[6px]">图层 3</span>
          </li>
          <li className="flex h-[58px] border-b border-[#3d3d3d] bg-[#535353]">
            <div className="flex w-[27px] shrink-0 justify-center border-r border-[#454545] pt-[6px]">
              <button aria-label="显示图层 1" className="flex size-[11px]"><Hidden /></button>
            </div>
            <div className="flex-1">
              <div className="flex h-6 items-center">
                <span className={`${thumb} bg-[repeating-linear-gradient(90deg,#333330_0_3px,#464642_4px_5px,#2b2b28_6px_8px)]`} />
                <span className="ml-[8px]">图层 1</span>
                <span className="mr-[4px] ml-auto text-[12px] text-[#c8c8c8] italic">fx</span>
                <button aria-label="折叠效果" className="flex h-full w-[10px] items-center justify-center bg-linear-to-b from-[#999999] to-[#747474]">
                  <svg width="5" height="3" viewBox="0 0 5 3" fill="#222" aria-hidden="true"><path d="M0 3h5L2.500 0z" /></svg>
                </button>
              </div>
              <div className="flex h-4 items-center gap-[5px] pl-[17px]"><Eye dim />效果</div>
              <div className="flex h-[18px] items-center gap-[5px] pl-[32px]"><Eye dim />渐变叠加</div>
            </div>
          </li>
          <li className="flex h-[25px] items-center border-b border-[#3d3d3d] bg-[#535353]">
            <button aria-label="显示背景" className={eyeCell}><Hidden /></button>
            <span className={`${thumb} bg-white`} />
            <em className="ml-[10px]">背景</em>
            <span className="mr-[14px] ml-auto">
              <Icon w={11} h={12}><path d="M1.500 5.500h8v6h-8zM3.500 5V3a2 2 0 014 0v2M5.500 7.500v2" /></Icon>
            </span>
          </li>
        </ul>
        <div className="w-[13px] bg-linear-to-r from-[#373737] to-[#454545]" />
      </div>
      <footer className="flex h-[17px] shrink-0 items-center justify-center gap-[8px] border-t border-[#353535] pl-[8px] text-[#b8b8b8]">
        <button aria-label="链接图层"><Icon className="text-[#808080]"><path d="M6 5H4a3 3 0 000 6h2M10 5h2a3 3 0 010 6h-2M5 8h6" strokeWidth="1.300" /></Icon></button>
        <button aria-label="图层样式" className="w-4 text-[12px] leading-4 italic">fx.</button>
        <button aria-label="添加蒙版"><Icon><path d="M2 3h12v10H2z" fill="currentColor" stroke="none" /><circle cx="8" cy="8" r="2.500" fill="#444" stroke="none" /></Icon></button>
        <button aria-label="新建调整图层"><Icon><circle cx="7" cy="8" r="4.500" /><path d="M10 5l-6 6a4.500 4.500 0 016-6z" fill="currentColor" /><path d="M13 11h2v2h-2z" fill="currentColor" stroke="none" /></Icon></button>
        <button aria-label="新建组"><Icon><path d="M2 3h5l1 2h6v8H2z" fill="currentColor" stroke="none" /></Icon></button>
        <button aria-label="新建图层"><Icon><path d="M4 4h9v9H9V8H4z" fill="currentColor" stroke="none" /><path d="M4 9l4 4V9z" fill="currentColor" stroke="none" /></Icon></button>
        <button aria-label="删除图层"><Icon><path d="M3 5h10M6 4.500V3h4v1.500M4.500 6.500v6h7v-6M6.500 7v5M8 7v5M9.500 7v5" /></Icon></button>
      </footer>
    </section>
  )
}

function Watermark() {
  return (
    <div className="pointer-events-none absolute right-[53px] bottom-[19px] flex flex-col text-[#cccccc]">
      <div className="flex h-[56px] items-end">
        <span className="font-['Liberation_Sans',sans-serif] text-[39px] leading-[38px] font-bold">Bai</span>
        <svg width="52" height="56" viewBox="0 0 52 56" fill="currentColor" aria-hidden="true">
          <ellipse cx="6.500" cy="21" rx="6.500" ry="8.500" />
          <ellipse cx="19" cy="9" rx="6" ry="8.500" />
          <ellipse cx="35" cy="10" rx="6.500" ry="8.500" />
          <ellipse cx="45" cy="25" rx="6.500" ry="8.500" />
          <path d="M25 22c9 0 11 9 17 14 7 6 6 19-5 19-5 0-8-1-12-1s-7 1-12 1C1 55 1 42 8 36c6-5 8-14 17-14z" />
          <text x="25" y="50" textAnchor="middle" fontSize="24" fontWeight="700" fontFamily="Liberation Sans, sans-serif" fill="#474747">du</text>
        </svg>
        <span className="ml-[2px] text-[30px] leading-[36px] font-black">经验</span>
      </div>
      <span className="text-[21px] leading-[28px]">jingyan.baidu.com</span>
    </div>
  )
}

export default function App() {
  return (
    <div className="relative flex h-screen min-h-[640px] flex-col overflow-hidden border-t-1 border-r-2 border-b-2 border-l-2 border-[#1c1a1c] bg-[#535353] pr-px pb-px pl-[2px] font-['Open_Sans','Noto_Sans_CJK_SC',sans-serif] text-[11px] leading-4 text-[#dddddd]">
      <MenuBar />
      <OptionsBar />
      <div className="flex min-h-0 flex-1 border-b border-[#333333]">
        <Toolbar />
        <main className="flex min-w-0 flex-1 flex-col gap-[2px] border-x-3 border-[#303030] bg-[#303030]">
          <Workspace />
          <div className="bg-[#535353]"><Timeline /></div>
        </main>
        <Dock />
        <div className="flex w-[218px] shrink-0 flex-col border-r-2 border-l-3 border-[#303030]">
          <div className="flex h-[11px] shrink-0 items-center justify-end bg-[#343434] pr-[3px]"><Chevrons /></div>
          <AdjustPanel />
          <div className="h-[2px] shrink-0 bg-[#303030]" />
          <LayersPanel />
        </div>
      </div>
      <Watermark />
    </div>
  )
}
